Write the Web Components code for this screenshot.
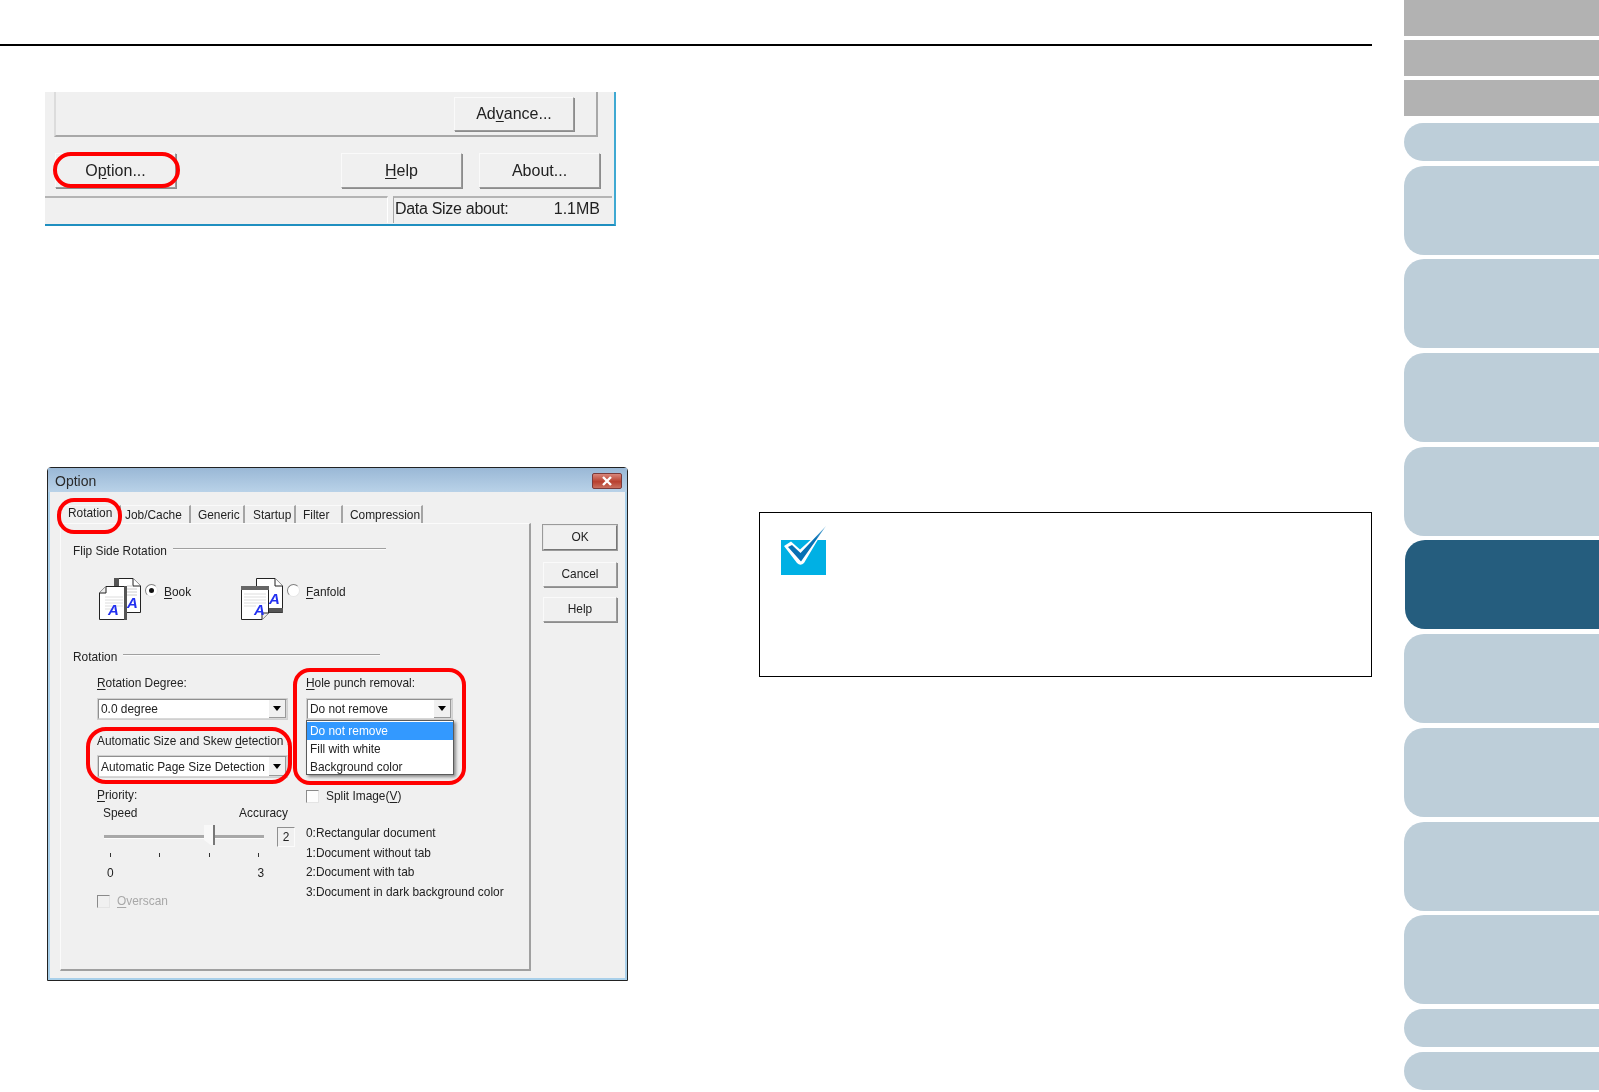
<!DOCTYPE html>
<html>
<head>
<meta charset="utf-8">
<title>Option</title>
<style>
  html, body { margin: 0; background: #fff; }
  body { font-family: "Liberation Sans", Arial, sans-serif; overflow: hidden; }
</style>
</head>
<body>
<manual-page></manual-page>

<script>
// every element is a shadow root made from its css + html
function register(name, css, html) {
  const template = document.createElement("template");
  template.innerHTML = `<style>${css}</style>${html}`;
  customElements.define(name, class extends HTMLElement {
    constructor() {
      super();
      this.attachShadow({ mode: "open" });
      this.shadowRoot.appendChild(template.content.cloneNode(true));
    }
  });
}

const FACE = "#f0f0f0";

register("red-mark", `
  :host { position: absolute; box-sizing: border-box; border: 4px solid #f00; pointer-events: none; }
`, ``);

register("win-button", `
  :host {
    display: flex; align-items: center; justify-content: center; box-sizing: border-box;
    background: ${FACE}; color: #222;
    border: 1px solid; border-color: #fafafa #9a9a9a #9a9a9a #fafafa;
    box-shadow: 1px 1px 0 #8c8c8c;
  }
`, `<slot></slot>`);

register("win-combo", `
  :host {
    display: flex; align-items: center; box-sizing: border-box; height: 22px;
    background: #fff; border: 2px solid; border-color: #8f8f8f #d8d8d8 #d8d8d8 #8f8f8f;
    outline: 1px solid #d0d0d0; outline-offset: -1px;
  }
  .value { flex: 1; padding-left: 2px; white-space: nowrap; overflow: hidden; }
  .arrow {
    width: 17px; align-self: stretch; background: ${FACE}; box-sizing: border-box;
    border-right: 1px solid #999; border-bottom: 1px solid #999;
    display: flex; align-items: center; justify-content: center;
  }
  .arrow i { border: 4px solid transparent; border-top: 5px solid #000; border-bottom: 0; }
`, `<div class="value"><slot></slot></div><div class="arrow"><i></i></div>`);

register("win-check", `
  :host { display: flex; align-items: center; gap: 7px; height: 14px; }
  .box { width: 13px; height: 13px; background: #fdfdfd; box-sizing: border-box;
         border: 1px solid; border-color: #8a8a8a #e4e4e4 #e4e4e4 #8a8a8a; }
  :host([off]) { color: #a8a8a8; }
  :host([off]) .box { background: ${FACE}; }
`, `<div class="box"></div><slot></slot>`);

register("win-radio", `
  :host { display: block; width: 13px; height: 13px; margin-top: 7px; box-sizing: border-box; position: relative;
          border-radius: 50%; background: #fff; border: 1px solid; border-color: #808080 #e6e6e6 #e6e6e6 #808080; }
  :host([on])::after { content: ""; position: absolute; left: 3px; top: 3px; width: 5px; height: 5px;
          border-radius: 50%; background: #111; }
`, ``);

register("group-head", `
  :host { display: flex; align-items: center; gap: 6px; height: 16px; white-space: nowrap; }
  i { flex: 1; height: 1px; background: #a0a0a0; border-bottom: 1px solid #fbfbfb; margin-bottom: 4px; }
`, `<slot></slot><i></i>`);

register("win-tab", `
  :host { display: flex; align-items: center; box-sizing: border-box; height: 18px; white-space: nowrap; color: #222;
          border-right: 2px solid #a4a4a4; border-top: 1px solid #fafafa; }
`, `<slot></slot>`);

register("book-icon", `
  :host { display: block; width: 42px; height: 43px; }
  svg { display: block; }
  text { font: italic bold 15px "Liberation Sans", sans-serif; fill: #2230f0; }
`, `<svg width="42" height="43" viewBox="0 0 42 43">
  <path d="M15.5 1.5H34L41.5 9V35.5H15.5Z" fill="#fff" stroke="#222"/>
  <path d="M34 1.5V9H41.5" fill="#fff" stroke="#222"/>
  <rect x="15" y="1" width="5" height="8" fill="#555"/>
  <path d="M28 9H34M28 12H38M28 15H38M28 18H38" stroke="#ccc"/>
  <text x="28" y="31">A</text>
  <path d="M7 9.5H27.5V42.5H0.5V16Z" fill="#fff" stroke="#222"/>
  <path d="M7 9.5V16H0.5" fill="#eee" stroke="#222"/>
  <rect x="25" y="9" width="3" height="34" fill="#555"/>
  <path d="M6 20H24M6 23H24M6 26H24M6 29H24M6 32H17" stroke="#ddd"/>
  <text x="9" y="38">A</text>
</svg>`);

register("fanfold-icon", `
  :host { display: block; width: 42px; height: 43px; }
  svg { display: block; }
  text { font: italic bold 15px "Liberation Sans", sans-serif; fill: #2230f0; }
`, `<svg width="42" height="43" viewBox="0 0 42 43">
  <path d="M15.5 1.5H34L41.5 9V35.5H15.5Z" fill="#fff" stroke="#222"/>
  <path d="M34 1.5V9H41.5" fill="#fff" stroke="#222"/>
  <rect x="15" y="31" width="27" height="4.5" fill="#555"/>
  <text x="28" y="27">A</text>
  <path d="M0.5 9.5H27.5V36L21 42.5H0.5Z" fill="#fff" stroke="#222"/>
  <path d="M21 42.5V36H27.5" fill="#eee" stroke="#222"/>
  <rect x="0" y="9" width="28" height="4" fill="#666"/>
  <path d="M3 17H25M3 20H25M3 23H25M3 26H25M3 29H15" stroke="#ddd"/>
  <text x="13" y="38">A</text>
</svg>`);

register("check-icon", `
  :host { display: block; width: 45px; height: 49px; }
  svg { display: block; }
`, `<svg width="45" height="49" viewBox="0 0 45 49">
  <defs><linearGradient id="tick" gradientUnits="userSpaceOnUse" x1="24" y1="22" x2="45" y2="0">
    <stop offset="0.45" stop-color="#0670b4"/><stop offset="1" stop-color="#7dbde0"/>
  </linearGradient></defs>
  <rect y="14" width="45" height="35" fill="#00b0e4"/>
  <path d="M3 20L10 15.5L19 23.5L45 0L23 37Q19.5 40.5 16 37Z" fill="#fff"/>
  <path d="M7 21L11 19L19.5 27L45 0L20 35.5Z" fill="url(#tick)"/>
</svg>`);

register("side-tab", `
  :host { display: block; flex: none; box-sizing: border-box; height: 89px; background: #bdced9; border-radius: 20px 0 0 20px; }
  :host([short]) { height: 38px; border-radius: 19px 0 0 19px; }
  :host([grey]) { height: 36px; background: #b2b2b2; border-radius: 0; }
  :host([active]) { background: #255d7e; margin-left: 1px; }
`, ``);

register("side-nav", `
  :host { display: flex; flex-direction: column; width: 195px; height: 1092px; }
  side-tab { margin-bottom: 4.7px; }
  .g { margin-bottom: 4px; }
  .last-g { margin-bottom: 7px; }
`, `
  <side-tab grey class="g"></side-tab>
  <side-tab grey class="g"></side-tab>
  <side-tab grey class="last-g"></side-tab>
  <side-tab short></side-tab>
  <side-tab></side-tab>
  <side-tab></side-tab>
  <side-tab></side-tab>
  <side-tab></side-tab>
  <side-tab active></side-tab>
  <side-tab></side-tab>
  <side-tab></side-tab>
  <side-tab></side-tab>
  <side-tab></side-tab>
  <side-tab short></side-tab>
  <side-tab short></side-tab>
`);

register("scan-footer", `
  :host {
    display: block; position: relative; box-sizing: border-box; width: 571px; height: 134px;
    background: ${FACE}; color: #222; font-size: 16px; filter: blur(.35px);
    border-right: 2px solid #3fa9d2; border-bottom: 2px solid #1f8fc0;
  }
  .panel {
    box-sizing: border-box; margin-left: 9px; width: 544px; height: 45px; padding: 5px 22px 0 0;
    display: flex; justify-content: flex-end; align-items: flex-start;
    border: 2px solid #a8a8a8; border-top: 0; border-left: 2px solid #dcdcdc;
  }
  .panel win-button { width: 120px; height: 34px; }
  .actions { display: flex; margin-top: 16px; padding-left: 10px; }
  .actions win-button { width: 121px; height: 35px; }
  .actions .help { margin-left: 165px; }
  .actions .about { margin-left: 17px; }
  .status { display: flex; margin-top: 8px; height: 27px; }
  .status .blank { width: 342px; border-top: 2px solid #b4b4b4; border-right: 1px solid #fff; }
  .status .cell {
    margin-left: 5px; width: 219px; box-sizing: border-box; padding: 0 12px 4px 1px;
    display: flex; justify-content: space-between; align-items: center;
    border-top: 2px solid #b4b4b4; border-left: 1px solid #a8a8a8; white-space: nowrap;
  }
  .status .label { letter-spacing: -.3px; }
  red-mark { left: 8px; top: 60px; width: 127px; height: 36px; border-radius: 18px; }
  u { text-underline-offset: 2px; }
`, `
  <div class="panel"><win-button>Ad<u>v</u>ance...</win-button></div>
  <div class="actions">
    <win-button>O<u>p</u>tion...</win-button>
    <win-button class="help"><u>H</u>elp</win-button>
    <win-button class="about">About...</win-button>
  </div>
  <div class="status">
    <div class="blank"></div>
    <div class="cell"><span class="label">Data Size about:</span><span>1.1MB</span></div>
  </div>
  <red-mark></red-mark>
`);

register("option-dialog", `
  :host {
    display: block; position: relative; box-sizing: border-box; width: 581px; height: 514px;
    background: #a9d0ea; border: 1px solid #222; border-radius: 4px 4px 0 0; padding: 0 2px 2px;
    font-size: 11.9px; color: #222; filter: blur(.3px);
  }
  .title {
    height: 24px; margin: 0 -2px; padding: 1px 5px 0 7px; box-sizing: border-box; display: flex; align-items: center; justify-content: space-between;
    background: linear-gradient(#9ab8d6, #b9d2e8); font-size: 14px; color: #2a2a2a;
  }
  .close {
    width: 30px; height: 16px; box-sizing: border-box; border: 1px solid #7a3a3a; border-radius: 2px;
    background: linear-gradient(#d9867a, #b8402f 55%, #c9705f); display: flex; align-items: center; justify-content: center;
  }
  .client { display: flex; height: 486px; background: ${FACE}; box-sizing: border-box; }
  .left { margin-left: 10px; width: 471px; padding-top: 13px; }
  .tabs { display: flex; height: 18px; }
  .page {
    box-sizing: border-box; height: 448px; padding: 19px 0 0 12px;
    border: 1px solid #fbfbfb; border-right: 2px solid #a0a0a0; border-bottom: 2px solid #a0a0a0;
  }
  .flip { width: 313px; }
  .rot { width: 307px; margin-top: 29px; }
  .sheets { display: flex; margin: 18px 0 0 26px; height: 43px; }
  .sheet { flex: none; width: 142px; display: flex; gap: 4px; align-items: flex-start; color: #222; white-space: nowrap; }
  .sheet span { margin: 8px 0 0 2px; line-height: 15px; }
  .cols { display: flex; gap: 18px; margin: 10px 0 0 24px; }
  .col { position: relative; }
  .col.a { width: 191px; }
  .col.b { width: 190px; }
  .lab { height: 16px; line-height: 16px; white-space: nowrap; }
  .col win-combo { margin-top: 7px; }
  .col.b win-combo { width: 147px; }
  .auto { margin-top: 13px; }
  .col .deep { margin-top: 6px; height: 23px; }
  .prio { margin-top: 9px; }
  .ends { display: flex; justify-content: space-between; margin-top: 2px; padding-left: 6px; }
  .slide { display: flex; align-items: center; margin: 6px 0 0 7px; height: 20px; width: 191px; }
  .track { position: relative; width: 160px; height: 3px; background: #a8a8a8; border-bottom: 1px solid #fcfcfc; }
  .thumb { position: absolute; left: 100px; top: -10px; width: 11px; height: 20px; box-sizing: border-box;
           background: #f8f8f8; border-right: 2px solid #777; clip-path: polygon(0 0,100% 0,100% 100%,60% 100%,0 75%); }
  .val { width: 18px; height: 20px; margin-left: 13px; box-sizing: border-box; display: flex; align-items: center; justify-content: center;
         border: 1px solid; border-color: #8f8f8f #fbfbfb #fbfbfb #8f8f8f; }
  .ticks { display: flex; justify-content: space-between; width: 149px; height: 4px; margin: 6px 0 0 13px; }
  .ticks i { width: 1px; background: #333; }
  .nums { display: flex; justify-content: space-between; width: 157px; margin: 8px 0 0 10px; height: 16px; line-height: 16px; }
  .over { margin-top: 13px; }
  .split { margin-top: 69px; }
  .legend { margin-top: 21px; line-height: 19.7px; white-space: nowrap; }
  .drop {
    position: absolute; left: 0; top: 45px; width: 148px; height: 55px; box-sizing: border-box; background: #fff;
    border: 1px solid #5a5a5a; padding-top: 1px; box-shadow: 2px 2px 3px #8a8a8a; line-height: 18px;
  }
  .drop div { padding-left: 3px; height: 18px; }
  .drop .sel { background: #3399ff; color: #fff; }
  .right { margin-left: 12px; padding-top: 33px; width: 74px; display: flex; flex-direction: column; }
  .right win-button { height: 25px; padding-bottom: 2px; }
  .right .ok { border-color: #e8e8e8 #777 #777 #e8e8e8; box-shadow: 1px 1px 0 #555; outline: 1px solid #9a9a9a; }
  .right .cancel { margin-top: 12px; }
  .right .help { margin-top: 10px; }
  u { text-underline-offset: 2px; }
  red-mark.tab { left: 9px; top: 30px; width: 65px; height: 36px; border-radius: 17px; }
  red-mark.skew { left: 38px; top: 259px; width: 206px; height: 57px; border-radius: 20px; }
  red-mark.hole { left: 245px; top: 200px; width: 173px; height: 117px; border-radius: 17px; }
`, `
  <div class="title">
    <span>Option</span>
    <div class="close"><svg width="12" height="10" viewBox="0 0 12 10"><path d="M2 1L10 9M10 1L2 9" stroke="#fff" stroke-width="2.4"/></svg></div>
  </div>
  <div class="client">
    <div class="left">
      <div class="tabs">
        <win-tab style="width:61px;padding:0 0 3px 8px">Rotation</win-tab>
        <win-tab style="width:70px;padding-left:4px"><span>Job/Cache</span></win-tab>
        <win-tab style="width:54px;padding-left:7px">Generic</win-tab>
        <win-tab style="width:51px;padding-left:8px">Startup</win-tab>
        <win-tab style="width:47px;padding-left:7px">Filter</win-tab>
        <win-tab style="width:80px;padding-left:7px">Compression</win-tab>
      </div>
      <div class="page">
        <group-head class="flip">Flip Side Rotation</group-head>
        <div class="sheets">
          <div class="sheet"><book-icon></book-icon><win-radio on></win-radio><span><u>B</u>ook</span></div>
          <div class="sheet"><fanfold-icon></fanfold-icon><win-radio></win-radio><span><u>F</u>anfold</span></div>
        </div>
        <group-head class="rot">Rotation</group-head>
        <div class="cols">
          <div class="col a">
            <div class="lab"><u>R</u>otation Degree:</div>
            <win-combo>0.0 degree</win-combo>
            <div class="lab auto">Automatic Size and Skew <u>d</u>etection :</div>
            <win-combo class="deep">Automatic Page Size Detection</win-combo>
            <div class="lab prio"><u>P</u>riority:</div>
            <div class="lab ends"><span>Speed</span><span>Accuracy</span></div>
            <div class="slide">
              <div class="track"><div class="thumb"></div></div>
              <div class="val">2</div>
            </div>
            <div class="ticks"><i></i><i></i><i></i><i></i></div>
            <div class="nums"><span>0</span><span>3</span></div>
            <win-check off class="over"><span><u>O</u>verscan</span></win-check>
          </div>
          <div class="col b">
            <div class="lab"><u>H</u>ole punch removal:</div>
            <win-combo>Do not remove</win-combo>
            <div class="drop">
              <div class="sel">Do not remove</div>
              <div>Fill with white</div>
              <div>Background color</div>
            </div>
            <win-check class="split"><span>Split Image(<u>V</u>)</span></win-check>
            <div class="legend">
              0:Rectangular document<br>
              1:Document without tab<br>
              2:Document with tab<br>
              3:Document in dark background color
            </div>
          </div>
        </div>
      </div>
    </div>
    <div class="right">
      <win-button class="ok">OK</win-button>
      <win-button class="cancel">Cancel</win-button>
      <win-button class="help">Help</win-button>
    </div>
  </div>
  <red-mark class="tab"></red-mark>
  <red-mark class="skew"></red-mark>
  <red-mark class="hole"></red-mark>
`);

register("note-box", `
  :host { display: block; box-sizing: border-box; height: 165px; border: 1px solid #000; padding: 13px 21px; }
`, `<slot></slot>`);

register("manual-page", `
  :host { display: flex; width: 1599px; height: 1092px; }
  .main { flex: none; width: 1372px; padding-top: 44px; box-sizing: border-box; }
  .rule { height: 2px; background: #000; }
  .columns { display: flex; }
  .figures { flex: none; width: 759px; padding: 46px 0 0 45px; box-sizing: border-box; }
  option-dialog { margin: 241px 0 0 2px; }
  .notes { flex: 1; padding-top: 466px; }
  side-nav { margin-left: 32px; }
`, `
  <div class="main">
    <div class="rule"></div>
    <div class="columns">
      <div class="figures">
        <scan-footer></scan-footer>
        <option-dialog></option-dialog>
      </div>
      <div class="notes"><note-box><check-icon></check-icon></note-box></div>
    </div>
  </div>
  <side-nav></side-nav>
`);
</script>
</body>
</html>
